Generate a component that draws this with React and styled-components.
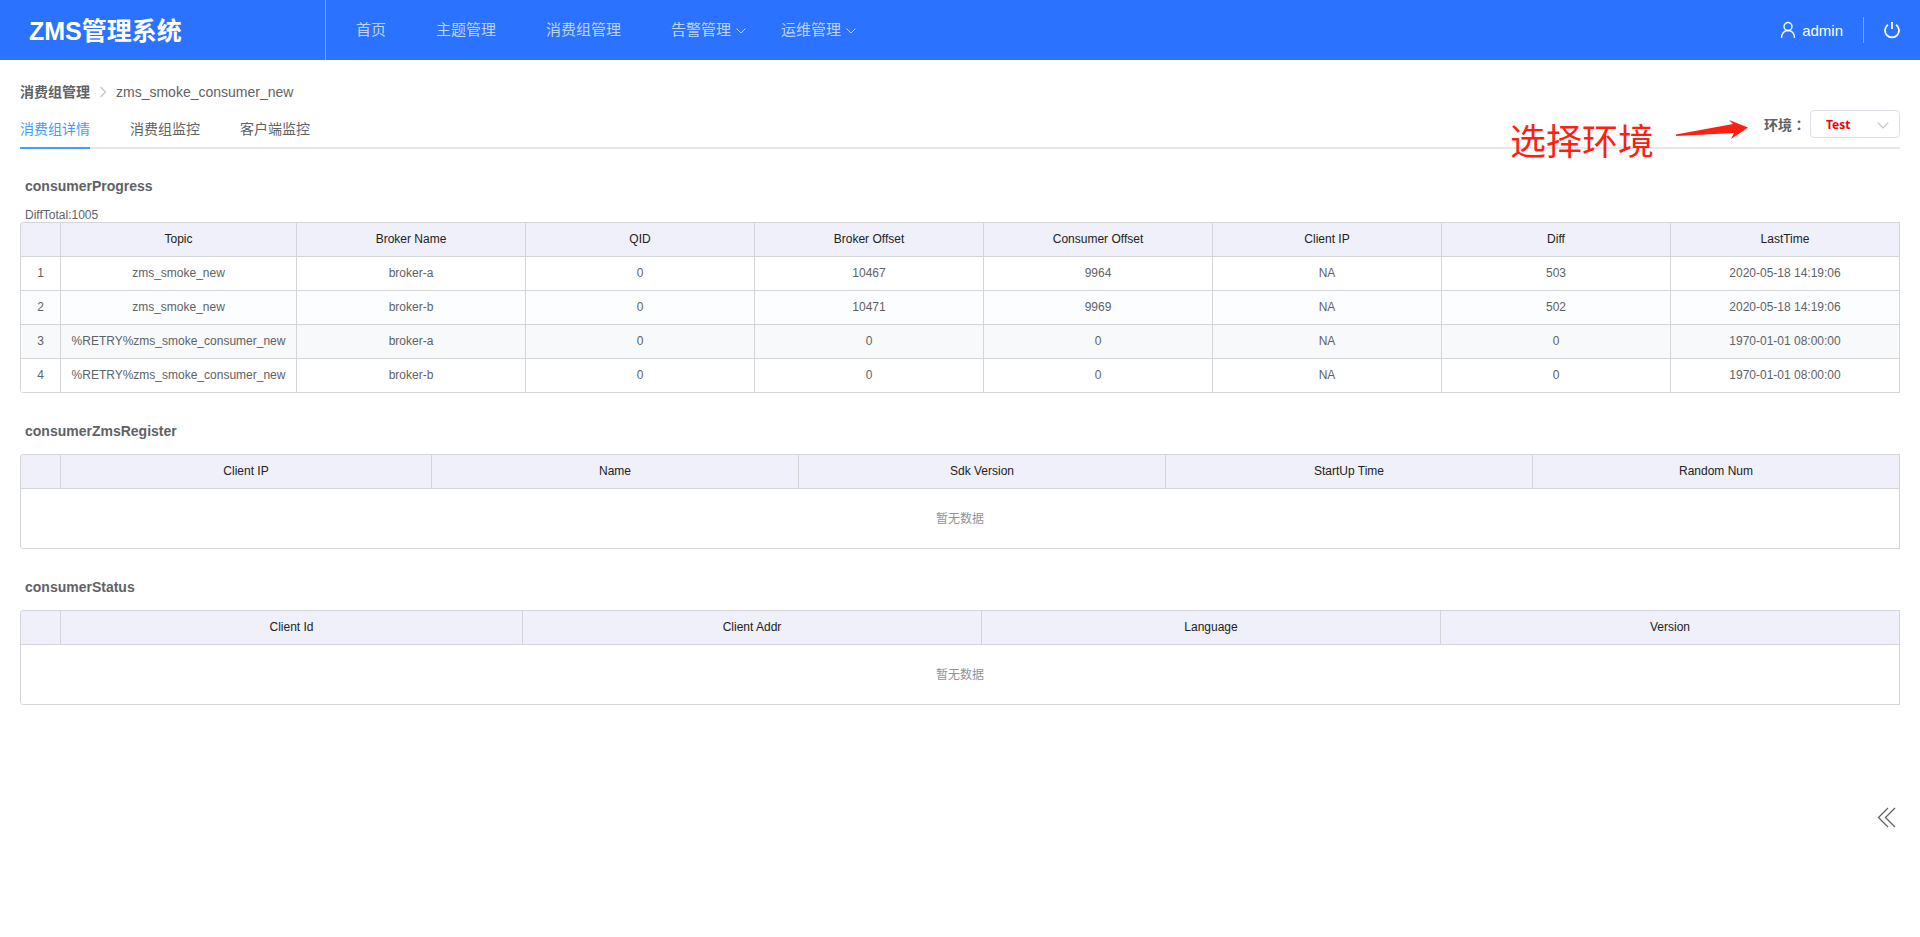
import React from "react";
import styled, { createGlobalStyle } from "styled-components";

const GlobalStyle = createGlobalStyle`
  * {
    box-sizing: border-box;
  }
  body {
    margin: 0;
    background: #fff;
    color: #606266;
    font-family: "Liberation Sans", "Noto Sans CJK SC", sans-serif;
    font-size: 14px;
  }
`;

const Header = styled.header`
  display: flex;
  align-items: center;
  height: 60px;
  padding-right: 20px;
  background: #2a72ff;
  color: #fff;
`;

const Logo = styled.h1`
  width: 326px;
  margin: 0;
  padding: 2px 0 0 29px;
  border-right: 1px solid #7fabff;
  font-size: 25px;
  line-height: 58px;
`;

const Nav = styled.nav`
  display: flex;
  flex: 1;
  gap: 50px;
  padding-left: 30px;
`;

const NavLink = styled.a`
  color: #bfd5ff;
  font-size: 15px;
  line-height: 20px;
  text-decoration: none;
`;

const NavMenus = styled.div`
  display: flex;
  gap: 34px;
`;

const NavMenu = styled.button`
  display: flex;
  align-items: center;
  gap: 4px;
  padding: 0;
  border: 0;
  background: none;
  color: #bfd5ff;
  font: inherit;
  font-size: 15px;
  line-height: 20px;
`;

const User = styled.div`
  display: flex;
  align-items: center;
  gap: 6px;
  font-size: 15px;
  line-height: 26px;
  padding-right: 20px;
  border-right: 1px solid #7fabff;
`;

const UserName = styled.span`
  padding-top: 2px;
  line-height: 24px;
`;

const IconButton = styled.button`
  display: flex;
  padding: 0;
  border: 0;
  background: none;
  color: inherit;
`;

const Logout = styled(IconButton)`
  margin-left: 20px;
`;

const Main = styled.main`
  padding: 22px 20px;
`;

const Breadcrumb = styled.nav`
  display: flex;
  align-items: center;
  gap: 8px;
  line-height: 20px;

  a {
    color: #606266;
    font-weight: 700;
    text-decoration: none;
  }
`;

const TabBar = styled.div`
  position: relative;
  display: flex;
  justify-content: space-between;
  height: 40px;
  margin-top: 7px;
  box-shadow: inset 0 -2px #e4e7ed;
`;

const Tabs = styled.div`
  display: flex;
  gap: 40px;
`;

const Tab = styled.button`
  padding: 2px 0 0;
  border: 0;
  border-bottom: 2px solid ${({ $active }) => ($active ? "#409eff" : "transparent")};
  background: none;
  color: ${({ $active }) => ($active ? "#409eff" : "#606266")};
  font: inherit;
  line-height: 36px;
`;

const Env = styled.div`
  display: flex;
  align-items: center;
  height: 30px;
  gap: 4px;

  label {
    font-family: "Noto Sans CJK TC", sans-serif;
    font-weight: 700;
    line-height: 20px;
  }
`;

const SelectBox = styled.div`
  position: relative;

  svg {
    position: absolute;
    top: 9px;
    right: 10px;
    pointer-events: none;
  }
`;

const Select = styled.select`
  display: block;
  width: 90px;
  height: 28px;
  padding: 0 15px;
  border: 1px solid #dcdfe6;
  border-radius: 4px;
  background: #fff;
  color: #f00000;
  font-family: "Noto Sans", sans-serif;
  font-size: 12px;
  font-weight: 700;
  appearance: none;
`;

const Hint = styled.div`
  position: absolute;
  top: 7px;
  right: 151px;
  display: flex;
  gap: 21px;
  color: #ff1e10;
  font-size: 36px;
  line-height: 54px;
  pointer-events: none;

  svg {
    margin-top: 3px;
  }
`;

const Title = styled.h2`
  margin: 0;
  padding: 0 5px;
  font-size: 14px;
  line-height: 20px;
`;

const Section = styled.section`
  margin-top: ${({ $first }) => ($first ? "27px" : "28px")};
`;

const Summary = styled.p`
  margin: 12px 0 0;
  padding: 0 5px;
  font-size: 12px;
  line-height: 14px;
`;

const TableFrame = styled.div`
  margin-top: ${({ $flush }) => ($flush ? "0" : "13px")};
  border: solid #d4d5d8;
  border-width: 1px 0 0 1px;
  border-radius: 4px 0 0 4px;
  overflow: hidden;
`;

const Table = styled.table`
  width: 100%;
  border-collapse: separate;
  border-spacing: 0;
  table-layout: fixed;
  font-size: 12px;
  line-height: 23px;
  text-align: center;
`;

const Th = styled.th`
  width: ${({ $width }) => ($width ? `${$width}px` : "auto")};
  height: 34px;
  padding: 0;
  border: solid #d4d5d8;
  border-width: 0 1px 1px 0;
  background: #eff0f9;
  color: #222;
  font-weight: 400;
`;

const Td = styled.td`
  height: 34px;
  padding: 0;
  border: solid #d4d5d8;
  border-width: 0 1px 1px 0;
`;

const Row = styled.tr`
  background: ${({ $tone }) => $tone || "#fff"};
`;

const Empty = styled(Td)`
  height: 60px;
  padding-top: 2px;
  color: #909399;
`;

const Expand = styled(IconButton)`
  position: fixed;
  right: 24px;
  bottom: 109px;
  color: #606266;
`;

const Chevron = ({ color = "currentColor", size = 12 }) => (
  <svg width={size} height={size === 12 ? 9 : 12} viewBox="0 0 12 9" fill="none" stroke={color}>
    <path d="M1.5 2.5 6 7l4.500-4.500" />
  </svg>
);

const progressColumns = [
  "Topic",
  "Broker Name",
  "QID",
  "Broker Offset",
  "Consumer Offset",
  "Client IP",
  "Diff",
  "LastTime",
];

const progressRows = [
  ["zms_smoke_new", "broker-a", 0, 10467, 9964, "NA", 503, "2020-05-18 14:19:06"],
  ["zms_smoke_new", "broker-b", 0, 10471, 9969, "NA", 502, "2020-05-18 14:19:06"],
  ["%RETRY%zms_smoke_consumer_new", "broker-a", 0, 0, 0, "NA", 0, "1970-01-01 08:00:00"],
  ["%RETRY%zms_smoke_consumer_new", "broker-b", 0, 0, 0, "NA", 0, "1970-01-01 08:00:00"],
];

const rowTones = ["#fff", "#fbfdff", "#f7f9fb", "#fff"];

const registerColumns = ["Client IP", "Name", "Sdk Version", "StartUp Time", "Random Num"];
const statusColumns = ["Client Id", "Client Addr", "Language", "Version"];

function DataTable({ columns, rows = [], firstWidth, flush }) {
  return (
    <TableFrame $flush={flush}>
      <Table>
        <thead>
          <tr>
            <Th $width={40} />
            {columns.map((name, i) => (
              <Th key={name} $width={i === 0 ? firstWidth : undefined}>
                {name}
              </Th>
            ))}
          </tr>
        </thead>
        <tbody>
          {rows.map((row, i) => (
            <Row key={i} $tone={rowTones[i]}>
              <Td>{i + 1}</Td>
              {row.map((cell, j) => (
                <Td key={j}>{cell}</Td>
              ))}
            </Row>
          ))}
          {rows.length === 0 && (
            <tr>
              <Empty colSpan={columns.length + 1}>暂无数据</Empty>
            </tr>
          )}
        </tbody>
      </Table>
    </TableFrame>
  );
}

export default function App() {
  return (
    <>
      <GlobalStyle />
      <Header>
        <Logo>ZMS管理系统</Logo>
        <Nav>
          <NavLink href="#home">首页</NavLink>
          <NavLink href="#topic">主题管理</NavLink>
          <NavLink href="#consumer">消费组管理</NavLink>
          <NavMenus>
            <NavMenu type="button">
              告警管理
              <Chevron />
            </NavMenu>
            <NavMenu type="button">
              运维管理
              <Chevron />
            </NavMenu>
          </NavMenus>
        </Nav>
        <User>
          <svg width="16" height="18" viewBox="0 0 16 18" fill="none" stroke="#fff" strokeWidth="1.4">
            <circle cx="8" cy="5.500" r="4" />
            <path d="M1.500 17c0-4.500 2.700-7.500 6.500-7.500s6.500 3 6.500 7.500" />
          </svg>
          <UserName>admin</UserName>
        </User>
        <Logout type="button" aria-label="退出">
          <svg width="16" height="17" viewBox="0 0 16 17" fill="none" stroke="#fff" strokeWidth="1.8">
            <path d="M4 2.700a7 7 0 1 0 8 0M8 0v7" />
          </svg>
        </Logout>
      </Header>

      <Main>
        <Breadcrumb>
          <a href="#consumer">消费组管理</a>
          <svg width="10" height="12" viewBox="0 0 10 12" fill="none" stroke="#c0c4cc" strokeWidth="1.2">
            <path d="M2.500 1l5 5-5 5" />
          </svg>
          <span>zms_smoke_consumer_new</span>
        </Breadcrumb>

        <TabBar>
          <Tabs role="tablist">
            <Tab type="button" role="tab" aria-selected="true" $active>
              消费组详情
            </Tab>
            <Tab type="button" role="tab">
              消费组监控
            </Tab>
            <Tab type="button" role="tab">
              客户端监控
            </Tab>
          </Tabs>
          <Env>
            <label htmlFor="env">环境：</label>
            <SelectBox>
              <Select id="env" defaultValue="Test">
                <option>Test</option>
              </Select>
              <Chevron color="#c0c4cc" size={14} />
            </SelectBox>
          </Env>
          <Hint>
            选择环境
            <svg width="74" height="22" viewBox="0 0 74 22" fill="#ff1e10">
              <path d="M1 15.500 58 5 54 1l19 7.500L56 20l3-6L1 17z" />
            </svg>
          </Hint>
        </TabBar>

        <Section $first>
          <Title>consumerProgress</Title>
          <Summary>DiffTotal:1005</Summary>
          <DataTable columns={progressColumns} rows={progressRows} firstWidth={236} flush />
        </Section>

        <Section>
          <Title>consumerZmsRegister</Title>
          <DataTable columns={registerColumns} firstWidth={371} />
        </Section>

        <Section>
          <Title>consumerStatus</Title>
          <DataTable columns={statusColumns} firstWidth={462} />
        </Section>
      </Main>

      <Expand type="button" aria-label="展开">
        <svg width="19" height="21" viewBox="0 0 19 21" fill="none" stroke="currentColor" strokeWidth="1.3">
          <path d="M11 1 1.500 10.500 11 20M18 1 8.500 10.500 18 20" />
        </svg>
      </Expand>
    </>
  );
}
